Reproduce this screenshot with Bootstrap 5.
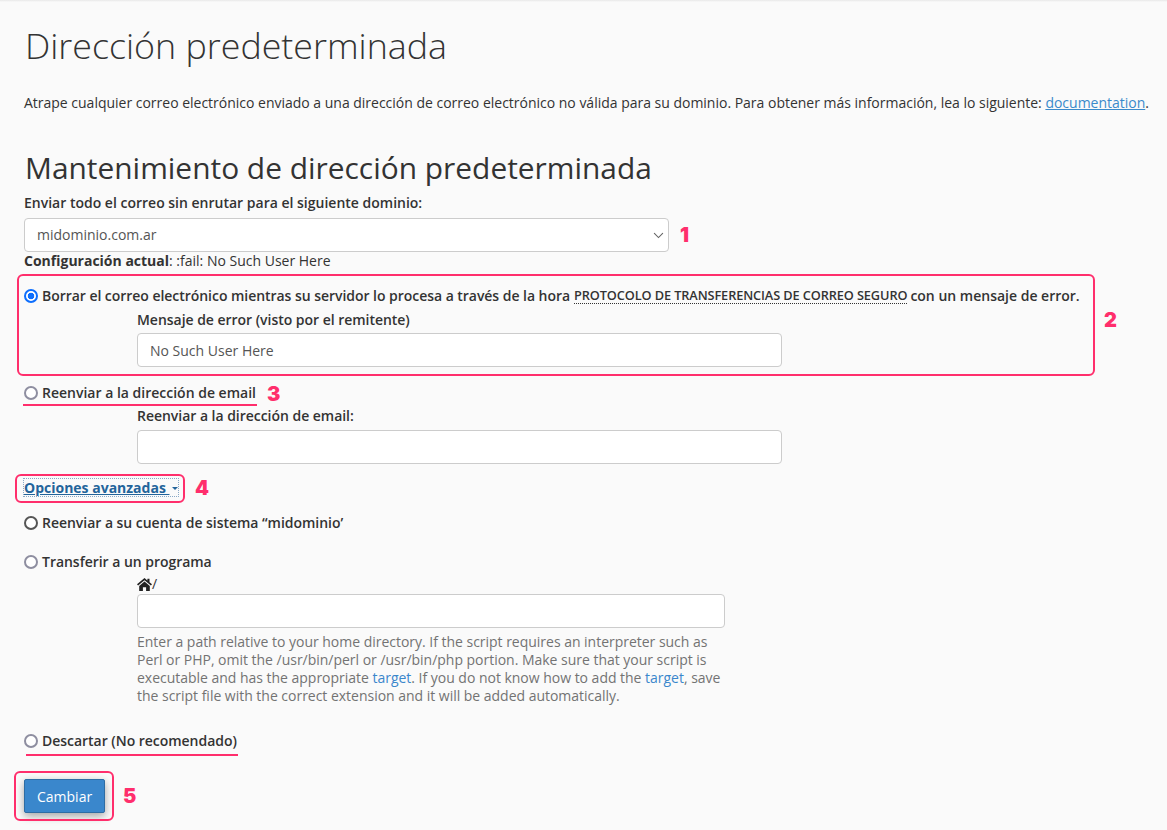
<!DOCTYPE html>
<html lang="es"><head><meta charset="utf-8"><title>Dirección predeterminada</title>
<link href="https://cdn.jsdelivr.net/npm/bootstrap@5.3.0/dist/css/bootstrap.min.css" rel="stylesheet">
<style>
html,body{height:830px;overflow:hidden}
body{background:#fafafa;font-family:"Open Sans",sans-serif;font-size:14px;line-height:20px;color:#333;position:relative}
.topshade{height:2px;background:linear-gradient(#e8e8e8,#fafafa)}
.pagewrap{padding:0 18px 0 24px}
.ttl{font-size:35.8px;font-weight:300;line-height:40px;margin:23px 0 0 1px;color:#333}
.intro{margin:28px 0 0;white-space:nowrap;line-height:20px;letter-spacing:-.01px}
.intro a{color:#3a8acb}
.helptext a{color:#3a87cc}
.sub{font-size:29.9px;font-weight:400;line-height:32px;margin:39px 0 0 1px;color:#333}
.lbl{display:block;font-weight:600;line-height:20px;margin:0}
.lbl0{margin-top:9px}
.fld{display:block;height:34px;border:1px solid #ccc;border-radius:4px;background-color:#fff;font-size:14px;color:#555;padding:6px 12px;line-height:20px;box-shadow:none}
.fld:focus{border-color:#ccc;box-shadow:none}
.selfld{--bs-form-select-bg-img:url("data:image/svg+xml,%3csvg xmlns='http://www.w3.org/2000/svg' viewBox='0 0 16 16'%3e%3cpath fill='none' stroke='%23666' stroke-linecap='round' stroke-width='1.600' d='M2 5l6 6 6-6'/%3e%3c/svg%3e");width:645px;margin-top:5px;background-position:right 4px center;background-size:11px 11px}
.cur{margin:-1px 0 0;line-height:20px}
.cur b{font-weight:700}
.radiorow{display:flex;align-items:center;font-weight:600;line-height:20px;margin:0;white-space:nowrap}
.radiorow input{appearance:none;width:14px;height:14px;border:2px solid #8e8ea0;border-radius:50%;background:#fff;margin:0 4px 0 0;flex:none}
.radiorow input.dark{border-color:#555}
.radiorow input:checked{border:2px solid #0d6efd;background:radial-gradient(circle,#0d6efd 3px,#fff 3.6px)}
.tight{letter-spacing:-.03px}
.tighter{letter-spacing:-.04px}
.abbr{font-size:12.75px;letter-spacing:-.1px;border-bottom:1px dotted #333;text-transform:uppercase;margin:0 3px 0 4px;line-height:15px}
.indent{margin-left:113px}
.w645{width:645px}
.w588{width:588px}
.adv{display:inline-block;font-weight:700;color:#23649b;line-height:17px;outline:1px dotted #8aa9c6}
.caretmark{display:inline-block;width:0;height:0;border:3.5px solid transparent;border-top-color:#23649b;border-bottom:0;margin:0 0 2px 3px;vertical-align:middle}
.homeline{line-height:16px;margin-top:4px}
.homeline svg{vertical-align:-2px}
.helptext{color:#737373;width:588px;line-height:18px;margin:5px 0 0;letter-spacing:-.02px}
.savebtn{background:#3a87cc;border:1px solid #2e6da4;color:#fff;font-size:14px;line-height:20px;padding:7px 12px 5px;border-radius:2px;box-shadow:0 3px 8px rgba(0,0,0,.35)}
.savebtn:hover{background:#3a87cc;color:#fff;border-color:#2e6da4}
.mark-box{position:absolute;border:2px solid #ff2e6c;border-radius:6px;pointer-events:none}
.mark-line{position:absolute;height:2px;background:#ff2e6c}
.mark-num{position:absolute;color:#ff2e6c;font-family:Inter,sans-serif;font-weight:900;font-size:20px;line-height:20px}
.r1{margin-top:15px}
.l1{margin-top:4px}
.f1{margin-top:3px}
.r2{margin-top:16px}
.l2{margin-top:3px}
.f2{margin-top:4px}
.advrow{margin-top:14px}
.r3{margin-top:15px}
.r4{margin-top:19px}
.f3{margin-top:2px}
.r5{margin-top:26px}
.savebtn{margin-top:28px}
.n1{left:680px;top:225px}
.b2{left:17px;top:274px;width:1078px;height:102px}
.n2{left:1104px;top:310px}
.m3{left:23px;top:404px;width:234px}
.n3{left:267px;top:384px}
.b4{left:15px;top:474px;width:170px;height:29px}
.n4{left:195px;top:478px}
.m5{left:26px;top:754px;width:212px}
.b5{left:14px;top:771px;width:100px;height:50px}
.n5{left:123px;top:786px}
</style></head><body>
<div class="topshade"></div>
<div class="pagewrap">
<h1 class="ttl">Dirección predeterminada</h1>
<p class="intro">Atrape cualquier correo electrónico enviado a una dirección de correo electrónico no válida para su dominio. Para obtener más información, lea lo siguiente: <a href="#">documentation</a>.</p>
<h2 class="sub">Mantenimiento de dirección predeterminada</h2>
<form>
<label class="lbl lbl0" for="dom">Enviar todo el correo sin enrutar para el siguiente dominio:</label>
<select id="dom" class="form-select fld selfld"><option>midominio.com.ar</option></select>
<p class="cur"><b>Configuración actual</b>: :fail: No Such User Here</p>
<label class="radiorow r1"><input type="radio" name="a" checked><span class="tighter">Borrar el correo electrónico mientras su servidor lo procesa a través de la hora</span><span class="abbr">Protocolo de transferencias de correo seguro</span><span>con un mensaje de error.</span></label>
<div class="indent">
<label class="lbl l1 tight">Mensaje de error (visto por el remitente)</label>
<input class="form-control fld w645 f1" value="No Such User Here">
</div>
<label class="radiorow r2"><input type="radio" name="a"><span>Reenviar a la dirección de email</span></label>
<div class="indent">
<label class="lbl l2 tight">Reenviar a la dirección de email:</label>
<input class="form-control fld w645 f2">
</div>
<div class="advrow"><a href="#" class="adv">Opciones avanzadas&nbsp;<span class="caretmark"></span></a></div>
<label class="radiorow r3"><input type="radio" name="a" class="dark"><span class="tight">Reenviar a su cuenta de sistema “midominio’</span></label>
<label class="radiorow r4"><input type="radio" name="a"><span class="tight">Transferir a un programa</span></label>
<div class="indent">
<div class="homeline"><svg width="15" height="13" viewBox="0 0 15 13" aria-hidden="true"><path fill="#222" d="M7.500 0 0 6.300l1.100 1.300L7.500 2.200l6.400 5.400L15 6.300l-2.500-2.100V.8h-2.100v1.600z"/><path fill="#222" d="M7.500 3.400 2.200 7.900V13h3.700V9.200h3.200V13h3.700V7.900z"/></svg>/</div>
<input class="form-control fld w588 f3">
<p class="helptext">Enter a path relative to your home directory. If the script requires an interpreter such as Perl or PHP, omit the /usr/bin/perl or /usr/bin/php portion. Make sure that your script is executable and has the appropriate <a href="#" class="text-decoration-none">target</a>. If you do not know how to add the <a href="#" class="text-decoration-none">target</a>, save the script file with the correct extension and it will be added automatically.</p>
</div>
<label class="radiorow r5"><input type="radio" name="a"><span class="tight">Descartar (No recomendado)</span></label>
<button type="button" class="btn savebtn">Cambiar</button>
</form>
</div>
<span class="mark-num n1">1</span>
<div class="mark-box b2"></div><span class="mark-num n2">2</span>
<div class="mark-line m3"></div><span class="mark-num n3">3</span>
<div class="mark-box b4"></div><span class="mark-num n4">4</span>
<div class="mark-line m5"></div>
<div class="mark-box b5"></div><span class="mark-num n5">5</span>
</body></html>
